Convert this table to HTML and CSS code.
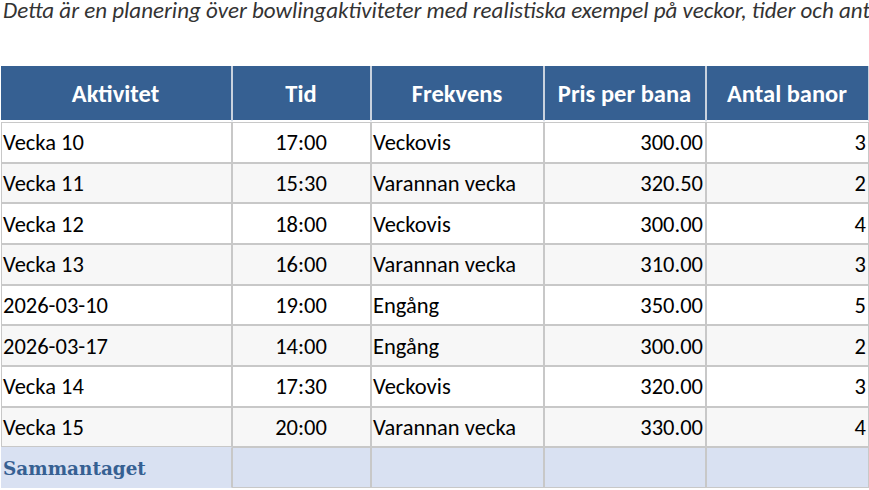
FILE: index.html
```html
<!DOCTYPE html>
<html lang="sv">
<head>
<meta charset="utf-8">
<title>Bowlingplanering</title>
<link rel="stylesheet" href="styles.css">
</head>
<body>
<p class="intro">Detta är en planering över bowlingaktiviteter med realistiska exempel på veckor, tider och antal banor.</p>
<table class="plan">
  <colgroup>
    <col class="c1"><col class="c2"><col class="c3"><col class="c4"><col class="c5">
  </colgroup>
  <thead>
    <tr><th>Aktivitet</th><th>Tid</th><th>Frekvens</th><th>Pris per bana</th><th>Antal banor</th></tr>
  </thead>
  <tbody>
    <tr><td>Vecka 10</td><td class="mid">17:00</td><td>Veckovis</td><td class="num">300.00</td><td class="num">3</td></tr>
    <tr><td>Vecka 11</td><td class="mid">15:30</td><td>Varannan vecka</td><td class="num">320.50</td><td class="num">2</td></tr>
    <tr><td>Vecka 12</td><td class="mid">18:00</td><td>Veckovis</td><td class="num">300.00</td><td class="num">4</td></tr>
    <tr><td>Vecka 13</td><td class="mid">16:00</td><td>Varannan vecka</td><td class="num">310.00</td><td class="num">3</td></tr>
    <tr><td>2026-03-10</td><td class="mid">19:00</td><td>Engång</td><td class="num">350.00</td><td class="num">5</td></tr>
    <tr><td>2026-03-17</td><td class="mid">14:00</td><td>Engång</td><td class="num">300.00</td><td class="num">2</td></tr>
    <tr><td>Vecka 14</td><td class="mid">17:30</td><td>Veckovis</td><td class="num">320.00</td><td class="num">3</td></tr>
    <tr><td>Vecka 15</td><td class="mid">20:00</td><td>Varannan vecka</td><td class="num">330.00</td><td class="num">4</td></tr>
  </tbody>
  <tfoot>
    <tr><th class="total">Sammantaget</th><td></td><td></td><td></td><td></td></tr>
  </tfoot>
</table>
</body>
</html>
```

FILE: styles.css
```css
html, body {
  margin: 0;
  padding: 0;
  background: #ffffff;
  overflow: hidden;
}
body {
  font-family: Carlito, Lato, "Liberation Sans", sans-serif;
  color: #000;
  width: 900px;
}
.intro {
  margin: 0 0 0 3px;
  font-style: italic;
  font-size: 23px;
  line-height: 20px;
  color: #333333;
  white-space: nowrap;
  height: 66px;
}
.plan {
  margin-left: 1px;
  border-collapse: separate;
  border-spacing: 0;
  table-layout: fixed;
  width: 868px;
  font-size: 22.5px;
}
.c1 { width: 231px; }
.c2 { width: 139px; }
.c3 { width: 173px; }
.c4 { width: 162px; }
.c5 { width: 163px; }
.plan th, .plan td {
  padding: 2px 2px 0 1px;
}
.plan thead th {
  background: #366092;
  color: #ffffff;
  font-weight: bold;
  font-size: 24.5px;
  text-align: center;
  height: 52px;
  border: 1px solid #c9d2de;
  border-top: 0;
  border-bottom: 2px solid #ffffff;
}
.plan thead th:first-child { border-left: 0; }
.plan tbody td {
  height: 36.67px;
  border: 1px solid #c8c8c8;
  line-height: 24px;
}
.plan tbody tr:nth-child(even) td { background: #f7f7f7; }
.plan tbody tr:nth-child(odd) td { background: #ffffff; }
.plan td.mid { text-align: center; }
.plan td.num { text-align: right; }
.plan tfoot td, .plan tfoot th {
  background: #d9e1f2;
  height: 36.67px;
}
.plan tfoot td {
  border: 1px solid #c8c8c8;
}
.plan tfoot th.total {
  text-align: left;
  font-family: "DejaVu Serif", "Liberation Serif", serif;
  font-weight: bold;
  font-size: 18.4px;
  color: #366092;
  border: 1px solid #d9e1f2;
  border-right-color: #c8c8c8;
}
```
